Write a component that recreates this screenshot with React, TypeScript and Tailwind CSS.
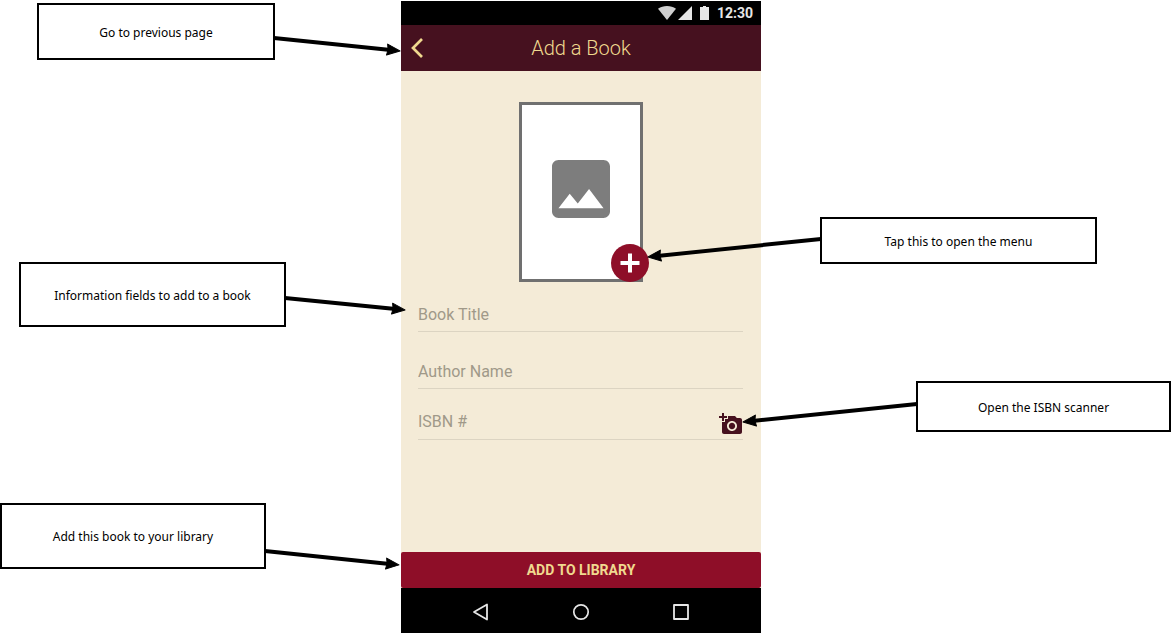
import type { ReactNode } from 'react';

type Point = [number, number];

/** Arrow drawn from `from` to `to`, measured from the callout's top left corner. */
function Arrow({ from, to }: { from: Point; to: Point }) {
  const angle = (Math.atan2(to[1] - from[1], to[0] - from[0]) * 180) / Math.PI;
  const length = Math.hypot(to[0] - from[0], to[1] - from[1]);
  return (
    <svg
      className="pointer-events-none absolute -top-0.5 -left-0.5 z-10 size-px overflow-visible"
      aria-hidden="true"
    >
      <g transform={`translate(${from[0]} ${from[1]}) rotate(${angle})`}>
        <path d={`M0 0H${length - 8}`} stroke="#000" strokeWidth="4" />
        <path
          d={`M${length - 1} 0L${length - 14} 5.500L${length - 13} 0L${length - 14} -5.500Z`}
          fill="#000"
          stroke="#000"
          strokeWidth="1"
          strokeLinejoin="round"
        />
      </g>
    </svg>
  );
}

function Callout({
  className,
  from,
  to,
  children,
}: {
  className: string;
  from: Point;
  to: Point;
  children: ReactNode;
}) {
  return (
    <div
      className={`relative flex items-center justify-center border-2 border-black bg-white pt-0.5 text-center text-xs text-black ${className}`}
    >
      <p>{children}</p>
      <Arrow from={from} to={to} />
    </div>
  );
}

function StatusBar() {
  return (
    <div className="flex h-6 items-center justify-end bg-black pr-2 text-[#e6e6e6]">
      <svg className="mr-0.5 h-3.5 w-[18px]" viewBox="0 0 18 14" aria-hidden="true">
        <path d="M9 14L0 2.8C2.6.9 5.700 0 9 0s6.400.9 9 2.800Z" fill="#cfcfcf" />
      </svg>
      <svg className="mr-2 size-3.5" viewBox="0 0 14 14" aria-hidden="true">
        <path d="M0 14L14 0V14Z" fill="currentColor" />
      </svg>
      <svg className="mr-2 h-3.5 w-[9px]" viewBox="0 0 9 14" aria-hidden="true">
        <path d="M0 1H3V0H6V1H9V14H0Z" fill="currentColor" />
      </svg>
      <span className="text-sm font-bold">12:30</span>
    </div>
  );
}

function Header() {
  return (
    <header className="relative flex h-[46px] items-center justify-center bg-[#46111f] text-[#f0d98f]">
      <button type="button" aria-label="Back" className="absolute left-2 flex size-6 items-center">
        <svg className="size-6" viewBox="0 0 24 24" aria-hidden="true">
          <path d="M13 3L4 12L13 21" fill="none" stroke="currentColor" strokeWidth="2.700" />
        </svg>
      </button>
      <h1 className="text-xl font-light">Add a Book</h1>
    </header>
  );
}

function Cover() {
  return (
    <div className="relative mx-auto flex h-[180px] w-[124px] items-center justify-center border-3 border-[#707070] bg-white">
      <svg className="mb-1.5 size-[58px]" viewBox="3 3 18 18" aria-hidden="true">
        <path
          d="M21 19V5c0-1.100-.9-2-2-2H5c-1.100 0-2 .9-2 2v14c0 1.100.9 2 2 2h14c1.100 0 2-.9 2-2zM8.500 13.500l2.500 3.010L14.500 12l4.500 6H5l3.500-4.500z"
          fill="#7d7d7d"
        />
      </svg>
      <button
        type="button"
        aria-label="Open the cover menu"
        className="absolute -right-[9px] -bottom-[3px] flex size-[38px] items-center justify-center rounded-full bg-[#8e0e28]"
      >
        <svg className="size-5" viewBox="0 0 20 20" aria-hidden="true">
          <path d="M10 0.500V19.500M0.500 10H19.500" stroke="#fff" strokeWidth="4" />
        </svg>
      </button>
    </div>
  );
}

function Field({ label, className, children }: { label: string; className: string; children?: ReactNode }) {
  return (
    <div className={`flex items-center border-b border-[#dcd4c2] ${className}`}>
      <input
        type="text"
        aria-label={label}
        placeholder={label}
        className="h-full min-w-0 flex-1 bg-transparent text-base text-[#46111f] outline-none placeholder:text-[#a09989]"
      />
      {children}
    </div>
  );
}

function NavBar() {
  return (
    <nav className="flex h-[45px] items-center justify-center gap-[76px] bg-black pt-0.5 text-[#e6e6e6]">
      <button type="button" aria-label="Back" className="size-6">
        <svg className="size-6" viewBox="0 0 24 24" fill="none" stroke="currentColor" strokeWidth="1.800" strokeLinejoin="round">
          <path d="M5 12L18 4.500V19.500Z" />
        </svg>
      </button>
      <button type="button" aria-label="Home" className="size-6">
        <svg className="size-6" viewBox="0 0 24 24" fill="none" stroke="currentColor" strokeWidth="1.700">
          <circle cx="12" cy="12" r="7.200" />
        </svg>
      </button>
      <button type="button" aria-label="Recent apps" className="size-6">
        <svg className="size-6" viewBox="0 0 24 24" fill="none" stroke="currentColor" strokeWidth="1.800" strokeLinejoin="round">
          <rect x="5" y="5" width="14" height="14" />
        </svg>
      </button>
    </nav>
  );
}

function Phone() {
  return (
    <main className="mt-px flex flex-col self-start bg-[#f4ebd7] font-[Roboto,sans-serif]">
      <StatusBar />
      <Header />
      <form className="flex flex-col pt-[31px]">
        <Cover />
        <div className="flex flex-col pr-[18px] pb-28 pl-[17px]">
          <Field label="Book Title" className="mt-[15px] h-[35px]" />
          <Field label="Author Name" className="mt-[22px] h-[35px]" />
          <Field label="ISBN #" className="mt-3.5 h-[37px]">
            <button type="button" aria-label="Open the ISBN scanner" className="mt-1.5 size-6 text-[#46111f]">
              <svg className="size-6" viewBox="0 0 24 24" fill="currentColor" aria-hidden="true">
                <path d="M3 4V1h2v3h3v2H5v3H3V6H0V4h3zm3 6V7h3V4h7l1.830 2H21c1.100 0 2 .9 2 2v12c0 1.100-.9 2-2 2H5c-1.100 0-2-.9-2-2V10h3zm7 9c2.760 0 5-2.240 5-5s-2.240-5-5-5-5 2.240-5 5 2.240 5 5 5zm-3.200-5c0 1.770 1.430 3.200 3.200 3.200s3.200-1.430 3.200-3.200-1.430-3.200-3.200-3.200-3.200 1.430-3.200 3.200z" />
              </svg>
            </button>
          </Field>
        </div>
        <button type="button" className="h-9 rounded-xs bg-[#8e0e28] text-sm font-bold text-[#f0d98f]">
          ADD TO LIBRARY
        </button>
      </form>
      <NavBar />
    </main>
  );
}

export default function App() {
  return (
    <div className="grid min-h-screen grid-cols-[401fr_360px_411fr] bg-white font-['Noto_Sans',sans-serif]">
      <aside className="flex flex-col items-end pt-[3px]">
        <Callout className="mr-[126px] h-[57px] w-[238px]" from={[237, 35]} to={[364, 48]}>
          Go to previous page
        </Callout>
        <Callout className="mt-[202px] mr-[115px] h-[65px] w-[267px]" from={[266, 36]} to={[387, 48]}>
          Information fields to add to a book
        </Callout>
        <Callout className="mt-44 mr-[135px] h-[66px] w-[266px]" from={[265, 48]} to={[400, 62]}>
          Add this book to your library
        </Callout>
      </aside>
      <Phone />
      <aside className="flex flex-col items-start pt-[217px]">
        <Callout className="ml-[59px] h-[47px] w-[277px]" from={[1, 22]} to={[-173, 40]}>
          Tap this to open the menu
        </Callout>
        <Callout className="mt-[117px] ml-[155px] h-[51px] w-[255px]" from={[1, 23]} to={[-174, 41]}>
          Open the ISBN scanner
        </Callout>
      </aside>
    </div>
  );
}
